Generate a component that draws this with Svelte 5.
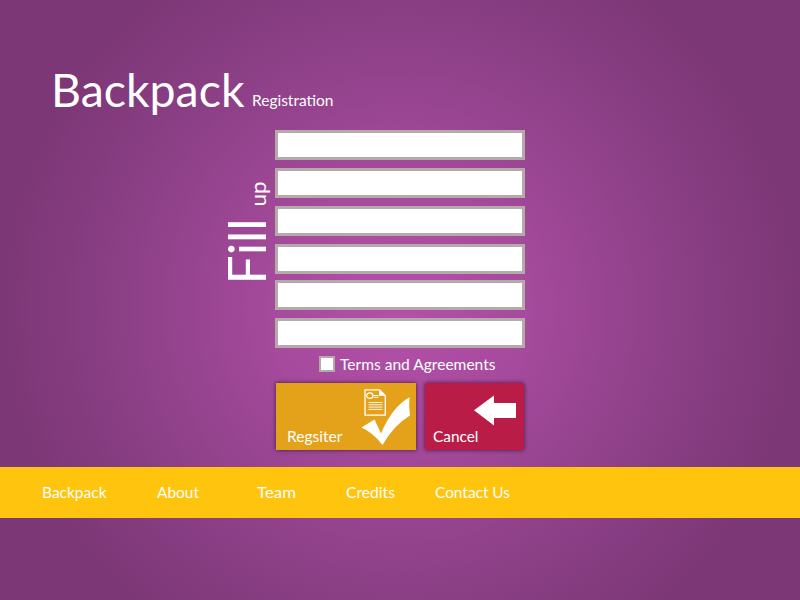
<script>
  const fields = ['First name', 'Last name', 'Username', 'Email', 'Password', 'Confirm password'];
  const links = [
    { text: 'Backpack', width: 64.5, gap: 50.5 },
    { text: 'About', width: 42, gap: 58 },
    { text: 'Team', width: 39, gap: 50.5 },
    { text: 'Credits', width: 49, gap: 40 },
    { text: 'Contact Us', width: 75, gap: 0 }
  ];
</script>

{#snippet label(text, width, size, height, baseline)}
  <svg class="label" {width} {height}>
    <text x="0" y={baseline} font-size={size} textLength={width} lengthAdjust="spacingAndGlyphs">{text}</text>
  </svg>
{/snippet}

<div class="page">
  <header>
    <h1>{@render label('Backpack', 193.5, 46.5, 60, 46.5)}</h1>
    <span class="subtitle">{@render label('Registration', 81.5, 15.4, 60, 46.2)}</span>
  </header>

  <main>
    <div class="side">
      <svg width="50" height="110">
        <g transform="translate(41.3 104) rotate(-90)">
          <text x="-0.5" y="0" font-size="53" textLength="66" lengthAdjust="spacingAndGlyphs">Fill</text>
          <text x="77.5" y="-0.3" font-size="20.5" textLength="25" lengthAdjust="spacingAndGlyphs">up</text>
        </g>
      </svg>
    </div>
    <form onsubmit={(e) => e.preventDefault()}>
      <div class="fields">
        {#each fields as name}
          <input aria-label={name} />
        {/each}
      </div>
      <label class="terms">
        <input type="checkbox" />
        {@render label('Terms and Agreements', 155.5, 16, 22, 16.3)}
      </label>
      <div class="actions">
        <button class="register">
          {@render label('Regsiter', 55.5, 16, 22, 17)}
          <svg class="icon" width="54" height="62" viewBox="0 0 54 62">
            <g fill="none" stroke="#fff">
              <path d="M5 4.8H19.5L25.3 10.5V30.2H5Z" stroke-width="1.3" />
              <path d="M19.5 4.8V10.5H25.3Z" fill="#fff" stroke-width=".8" />
              <ellipse cx="9.8" cy="10.6" rx="3.2" ry="2.8" stroke-width="1.2" />
              <path d="M13.5 10.5H18.5M13.5 12.3H18.5M8.5 17.5H22.5M8.5 19.8H22.5M8.5 22.1H22.5M8.5 24.4H22.5" stroke-width=".9" />
            </g>
            <path d="M1.5 42.5L14.5 34.5L21 48.5Q32 22 49.5 12.3Q48.5 21 50 30.5Q34 40 22.5 60Q13 47.5 1.5 42.5Z" fill="#fff" />
          </svg>
        </button>
        <button class="cancel">
          {@render label('Cancel', 45.5, 16, 22, 17)}
          <svg class="icon" width="43" height="32" viewBox="0 0 43 32">
            <path d="M0 15.3L20 .5V8H42V23H20V30.5Z" fill="#fff" />
          </svg>
        </button>
      </div>
    </form>
  </main>

  <nav>
    {#each links as link}
      <a href="#top" style="margin-right: {link.gap}px">{@render label(link.text, link.width, 15.8, 22, 16.3)}</a>
    {/each}
  </nav>
</div>

<style>
  :global(body) {
    margin: 0;
  }
  .page {
    width: 800px;
    height: 600px;
    overflow: hidden;
    display: flex;
    flex-direction: column;
    font-family: Lato, 'Liberation Sans', sans-serif;
    background: radial-gradient(circle at 400px 308px, #b450aa, #a54a9c 130px, #8d4087 270px, #7c3776 400px);
  }
  svg {
    display: block;
    overflow: visible;
  }
  text {
    fill: #fff;
  }
  header {
    display: flex;
    flex-shrink: 0;
    box-sizing: border-box;
    height: 130px;
    padding: 60px 0 0 51px;
  }
  h1 {
    margin: 0;
    font-weight: 400;
  }
  .subtitle {
    margin-left: 7.5px;
  }
  main {
    display: flex;
    height: 337px;
    flex-shrink: 0;
  }
  .side {
    margin: 50px 0 0 225px;
    width: 50px;
  }
  form {
    width: 250px;
  }
  .fields {
    display: flex;
    flex-direction: column;
    gap: 8px;
  }
  .fields input {
    box-sizing: border-box;
    width: 250px;
    height: 30px;
    border: 3px solid #b5aaaa;
    padding: 0 6px;
    margin: 0;
    border-radius: 0;
    background: #fff;
    font: inherit;
  }
  .fields input:nth-child(5) {
    margin-top: -2px;
  }
  .terms {
    display: flex;
    align-items: flex-start;
    padding: 6px 0 0 44px;
    height: 29px;
  }
  .terms input {
    appearance: none;
    box-sizing: border-box;
    width: 16px;
    height: 16px;
    margin: 2px 5px 0 0;
    border: 2px solid #b5aaaa;
    background: #fff;
  }
  .actions {
    display: flex;
    gap: 9px;
    padding-left: 1px;
  }
  button {
    display: flex;
    justify-content: space-between;
    flex-shrink: 0;
    box-sizing: border-box;
    height: 67px;
    margin: 0;
    border: 0;
    font: inherit;
    box-shadow: 0 0 4px rgba(40, 10, 40, 0.8);
  }
  button .label {
    align-self: flex-end;
  }
  .register {
    width: 140px;
    padding: 2px 2px 3px 10.5px;
    background: #e3a21a;
  }
  .cancel {
    width: 99px;
    padding: 12px 8px 3px 8px;
    border-radius: 2px;
    background: #b91d47;
  }
  .cancel .icon {
    margin-left: -5px;
    flex-shrink: 0;
  }
  .register .icon {
    align-self: flex-start;
  }
  nav {
    display: flex;
    align-items: flex-start;
    box-sizing: border-box;
    height: 51px;
    flex-shrink: 0;
    padding: 15px 0 0 41.5px;
    background: #ffc40d;
  }
</style>
